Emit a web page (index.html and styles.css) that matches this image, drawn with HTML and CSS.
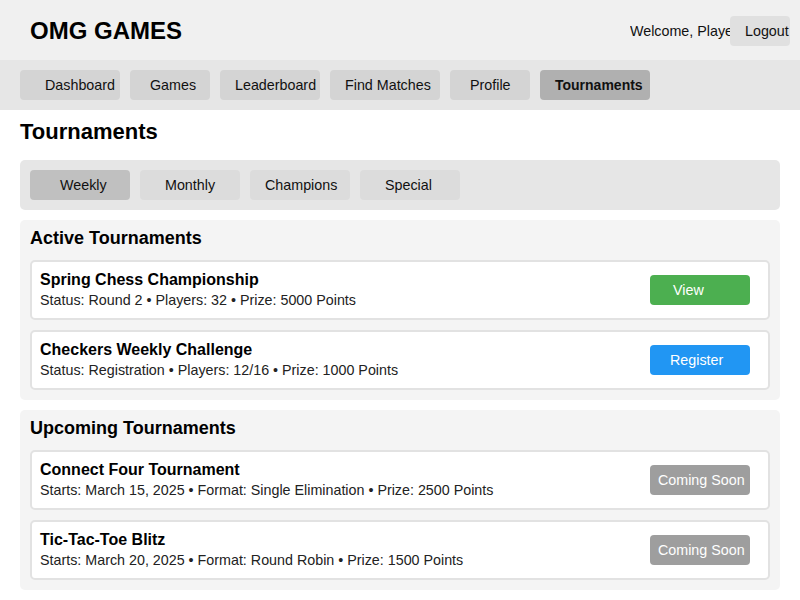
FILE: index.html
```html
<!DOCTYPE html>
<html lang="en">
<head>
<meta charset="utf-8">
<title>OMG Games - Tournaments</title>
<link rel="stylesheet" href="styles.css">
</head>
<body>
<header class="header">
  <h1 class="logo">OMG GAMES</h1>
  <div class="user">
    <span class="welcome">Welcome, Player1</span>
    <button class="logout">Logout</button>
  </div>
</header>
<nav class="nav">
  <a class="nav-btn w-dash">Dashboard</a>
  <a class="nav-btn w-games">Games</a>
  <a class="nav-btn w-lead">Leaderboard</a>
  <a class="nav-btn w-find">Find Matches</a>
  <a class="nav-btn w-prof">Profile</a>
  <a class="nav-btn w-tour active">Tournaments</a>
</nav>
<main class="main">
  <h2 class="page-title">Tournaments</h2>
  <div class="tabs">
    <button class="tab t-week active">Weekly</button>
    <button class="tab t-month">Monthly</button>
    <button class="tab t-champ">Champions</button>
    <button class="tab t-spec">Special</button>
  </div>
  <section class="section">
    <h3 class="section-title">Active Tournaments</h3>
    <div class="card">
      <div class="info">
        <div class="name">Spring Chess Championship</div>
        <div class="meta">Status: Round 2 • Players: 32 • Prize: 5000 Points</div>
      </div>
      <button class="action view">View</button>
    </div>
    <div class="card">
      <div class="info">
        <div class="name">Checkers Weekly Challenge</div>
        <div class="meta">Status: Registration • Players: 12/16 • Prize: 1000 Points</div>
      </div>
      <button class="action register">Register</button>
    </div>
  </section>
  <section class="section">
    <h3 class="section-title">Upcoming Tournaments</h3>
    <div class="card">
      <div class="info">
        <div class="name">Connect Four Tournament</div>
        <div class="meta">Starts: March 15, 2025 • Format: Single Elimination • Prize: 2500 Points</div>
      </div>
      <button class="action soon">Coming Soon</button>
    </div>
    <div class="card">
      <div class="info">
        <div class="name">Tic-Tac-Toe Blitz</div>
        <div class="meta">Starts: March 20, 2025 • Format: Round Robin • Prize: 1500 Points</div>
      </div>
      <button class="action soon">Coming Soon</button>
    </div>
  </section>
</main>
</body>
</html>
```
FILE: styles.css
```css
* { box-sizing: border-box; }
html, body { margin: 0; padding: 0; }
body {
  font-family: "Liberation Sans", Arial, sans-serif;
  font-size: 14.3px;
  color: #111;
  background: #fff;
  overflow: hidden;
}
button { font-family: inherit; font-size: 14.3px; border: none; cursor: pointer; }

.header {
  height: 60px;
  background: #f0f0f0;
  display: flex;
  align-items: center;
  justify-content: space-between;
  padding: 1px 10px 0 30px;
}
.logo {
  margin: 0;
  font-size: 24px;
  line-height: 30px;
  font-weight: bold;
  color: #000;
}
.user { display: flex; align-items: center; }
.welcome {
  width: 100px;
  white-space: nowrap;
  overflow: hidden;
  color: #111;
}
.logout {
  width: 60px;
  height: 30px;
  padding: 0 0 0 15px;
  text-align: left;
  background: #e0e0e0;
  color: #111;
  border-radius: 4px;
  white-space: nowrap;
  overflow: hidden;
}

.nav {
  height: 50px;
  background: #e6e6e6;
  display: flex;
  align-items: center;
  gap: 10px;
  padding: 0 20px;
}
.nav-btn {
  height: 30px;
  line-height: 30px;
  background: #d4d4d4;
  border-radius: 4px;
  color: #111;
  white-space: nowrap;
  overflow: hidden;
}
.nav-btn.active { background: #b0b0b0; font-weight: bold; }
.w-dash { width: 100px; padding-left: 25px; }
.w-games { width: 80px; padding-left: 20px; }
.w-lead { width: 100px; padding-left: 15px; }
.w-find { width: 110px; padding-left: 15px; }
.w-prof { width: 80px; padding-left: 20px; }
.w-tour { width: 110px; padding-left: 15px; font-size: 14px; }

.main { padding: 0 20px; }
.page-title {
  margin: 0;
  padding: 9px 0 15px;
  font-size: 22px;
  line-height: 26px;
  font-weight: bold;
  color: #000;
}
.tabs {
  display: flex;
  gap: 10px;
  padding: 10px;
  background: #e6e6e6;
  border-radius: 5px;
  margin-bottom: 10px;
}
.tab {
  width: 100px;
  height: 30px;
  background: #dcdcdc;
  border-radius: 4px;
  color: #111;
  text-align: left;
  white-space: nowrap;
}
.tab.active { background: #c0c0c0; }
.t-week { padding-left: 30px; }
.t-month { padding-left: 25px; }
.t-champ { padding-left: 15px; }
.t-spec { padding-left: 25px; }

.section {
  background: #f4f4f4;
  border-radius: 5px;
  padding: 10px;
  margin-bottom: 10px;
  display: flex;
  flex-direction: column;
  gap: 10px;
}
.section-title {
  margin: 0;
  padding-bottom: 4px;
  font-size: 18px;
  line-height: 16px;
  font-weight: bold;
  color: #000;
}
.card {
  background: #fff;
  border: 2px solid #e2e2e2;
  border-radius: 5px;
  padding: 8px 18px 8px 8px;
  display: flex;
  align-items: center;
  justify-content: space-between;
}
.name { font-size: 16px; line-height: 20px; font-weight: bold; color: #000; }
.meta { line-height: 20px; color: #222; }
.action {
  width: 100px;
  height: 30px;
  border-radius: 4px;
  color: #fff;
  text-align: left;
  white-space: nowrap;
  overflow: hidden;
}
.view { background: #4caf50; padding-left: 23px; }
.register { background: #2196f3; padding-left: 20px; }
.soon { background: #9e9e9e; padding-left: 8px; }
```
